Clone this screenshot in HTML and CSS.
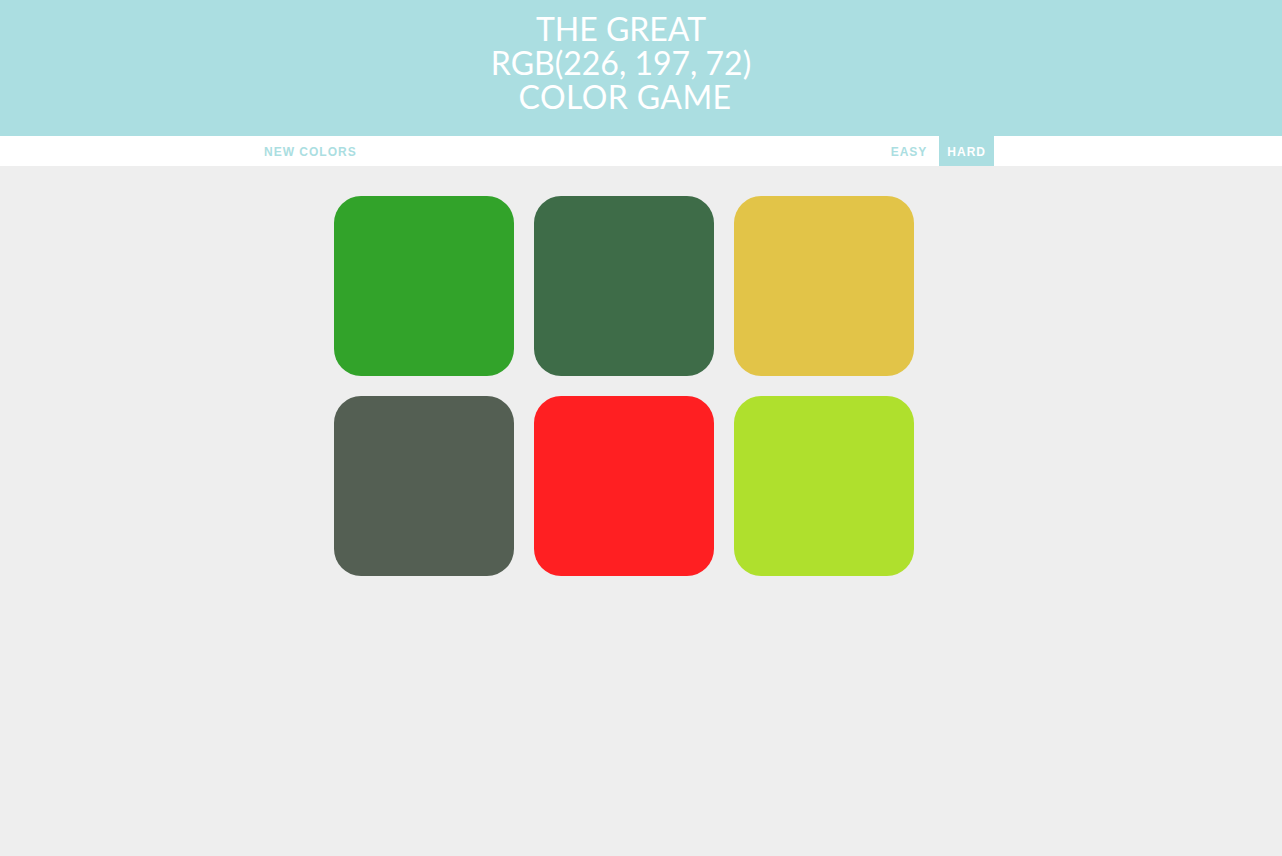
FILE: index.html
```html
<!DOCTYPE html>
<html>
<head>
<meta charset="utf-8">
<title>Color Game</title>
<link rel="stylesheet" href="styles.css">
</head>
<body>
<h1 class="title"><span class="line">THE GREAT</span><span class="line rgb">RGB(226, 197, 72)</span><span class="line last">COLOR GAME</span></h1>
<div class="stripe">
  <div class="stripe-inner">
    <button class="btn">New Colors</button>
    <span class="message"></span>
    <div class="modes">
      <button class="btn">Easy</button>
      <button class="btn selected">Hard</button>
    </div>
  </div>
</div>
<main class="main">
  <div class="grid">
    <div class="square sq1"></div>
    <div class="square sq2"></div>
    <div class="square sq3"></div>
    <div class="square sq4"></div>
    <div class="square sq5"></div>
    <div class="square sq6"></div>
  </div>
</main>
</body>
</html>
```

FILE: styles.css
```css
* { box-sizing: border-box; }
html, body { margin: 0; padding: 0; }
body {
  background: #eeeeee;
  font-family: Lato, "Open Sans", sans-serif;
  min-height: 856px;
}
.title {
  margin: 0;
  background: #abdee1;
  color: #ffffff;
  text-align: center;
  font-weight: 400;
  font-size: 32px;
  line-height: 34px;
  height: 136px;
  padding: 12px 40px 0 0;
}
.line { display: block; }
.line.last { padding-left: 8px; letter-spacing: 0.4px; }
.stripe {
  background: #ffffff;
  height: 30px;
  padding-right: 32px;
}
.stripe-inner {
  width: 738px;
  margin: 0 auto;
  height: 30px;
  display: flex;
  align-items: stretch;
  justify-content: space-between;
}
.modes { display: flex; gap: 4px; }
.btn {
  border: none;
  background: #ffffff;
  color: #abdee1;
  font-family: "Liberation Sans", Arial, sans-serif;
  font-weight: 700;
  font-size: 12px;
  letter-spacing: 1px;
  text-transform: uppercase;
  padding: 2px 8px 0;
  height: 30px;
  cursor: pointer;
}
.btn.selected {
  background: #abdee1;
  color: #ffffff;
}
.main { padding: 20px 34px 0 0; }
.grid {
  width: 600px;
  margin: 0 auto;
  display: flex;
  flex-wrap: wrap;
}
.square {
  width: 180px;
  height: 180px;
  margin: 10px;
  border-radius: 27px;
}
.sq1 { background: #32a32a; }
.sq2 { background: #3e6c48; }
.sq3 { background: #e2c448; }
.sq4 { background: #545f53; }
.sq5 { background: #ff1f22; }
.sq6 { background: #afe02d; }
```
